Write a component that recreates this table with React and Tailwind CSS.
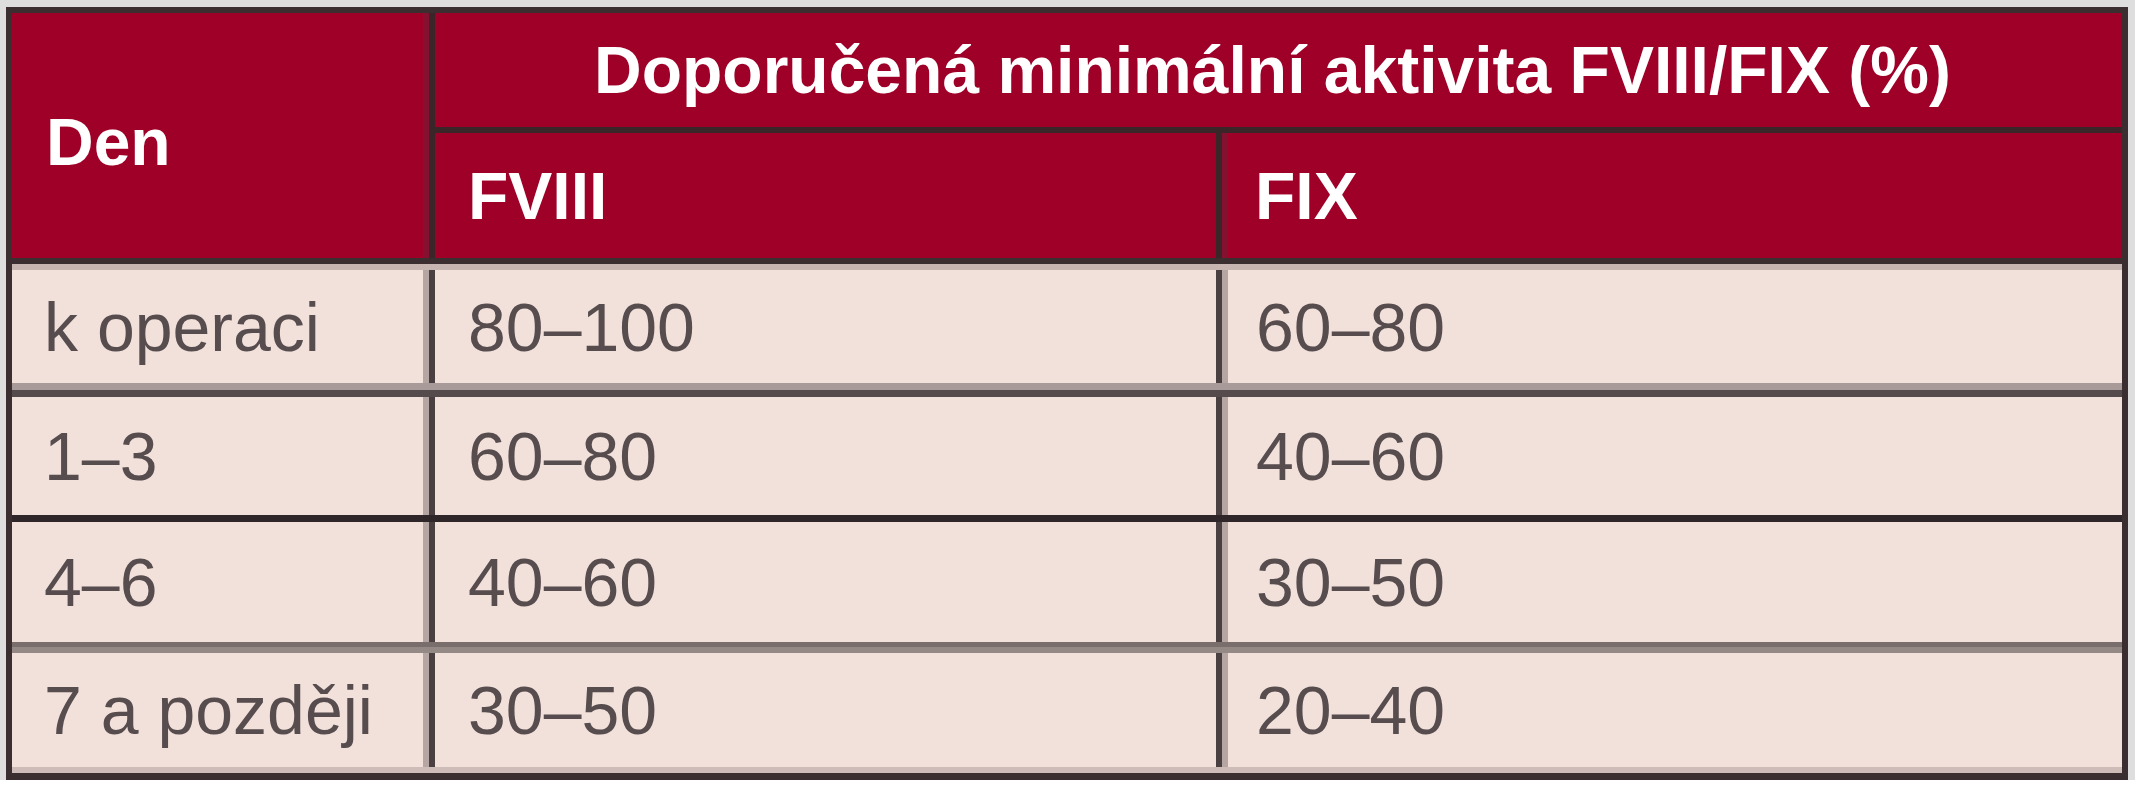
import React from 'react';

const rows = [
  { den: 'k operaci', f8: '80–100', f9: '60–80', h: 'h-[113px]', divider: ['h-[7px] bg-[#a89a98]', 'h-[7px] bg-[#554a4c]'] },
  { den: '1–3', f8: '60–80', f9: '40–60', h: 'h-[118px]', divider: ['h-[7px] bg-[#2e2628]'] },
  { den: '4–6', f8: '40–60', f9: '30–50', h: 'h-[120px]', divider: ['h-[5px] bg-[#7a6e6c]', 'h-[6px] bg-[#958986]'] },
  { den: '7 a později', f8: '30–50', f9: '20–40', h: 'h-[114px]', divider: [] },
];

function BodyRow({ row }) {
  return (
    <>
      <div className={`flex ${row.h} text-[68px] text-[#574c4e]`}>
        <div className="w-[423px] shrink-0 flex items-center pl-[32px] border-r-[6px] border-[#4a4042] shadow-[inset_-6px_0_0_#b5a6a4]">
          {row.den}
        </div>
        <div className="w-[787px] shrink-0 flex items-center pl-[33px] border-r-[6px] border-[#4a4042]">
          {row.f8}
        </div>
        <div className="flex-1 flex items-center pl-[34px] shadow-[inset_6px_0_0_#b5a6a4]">{row.f9}</div>
      </div>
      {row.divider.map((cls, i) => (
        <div key={i} className={cls} />
      ))}
    </>
  );
}

export default function App() {
  return (
    <div className="min-h-[800px] bg-white font-['Liberation_Sans',Arial,sans-serif] leading-none">
      <div className="w-[2135px] bg-[#dedede] pt-[7px] pl-[6px] pr-[7px]">
        <div className="border-[6px] border-b-[7px] border-[#3a2e31] bg-[#f2e1db]">
          {/* header */}
          <div className="flex h-[245px] bg-[#9e0028] text-white font-bold text-[66px]">
            <div className="w-[423px] shrink-0 flex items-center pl-[34px] pt-[12px] border-r-[6px] border-[#3a2529] shadow-[inset_-6px_0_0_#84112f]">
              Den
            </div>
            <div className="flex-1 flex flex-col">
              <div className="h-[120px] flex items-center justify-center pr-[12px] border-b-[6px] border-[#3a2529]">
                Doporučená minimální aktivita FVIII/FIX (%)
              </div>
              <div className="flex-1 flex">
                <div className="w-[787px] shrink-0 flex items-center pl-[33px] border-r-[6px] border-[#3a2529]">
                  FVIII
                </div>
                <div className="flex-1 flex items-center pl-[33px] shadow-[inset_6px_0_0_#84112f]">FIX</div>
              </div>
            </div>
          </div>
          <div className="h-[6px] bg-[#3a2e31]" />
          <div className="h-[6px] bg-[#c6b5b1]" />
          {rows.map((row) => (
            <BodyRow key={row.den} row={row} />
          ))}
          <div className="h-[6px] bg-[#cdbcb8]" />
        </div>
      </div>
    </div>
  );
}
